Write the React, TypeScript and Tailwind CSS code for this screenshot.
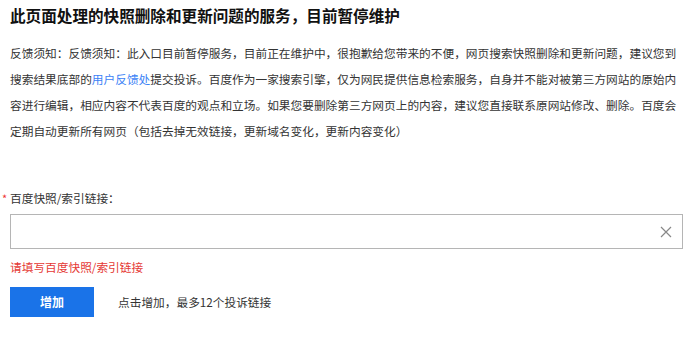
import React from "react";

export default function App() {
  const font = { fontFamily: '"Noto Sans CJK SC", "Noto Sans", sans-serif' };
  return (
    <div className="w-[700px] h-[340px] bg-white pl-[10px] pr-[17px]" style={font}>
      <h1 className="pt-[4px] text-[15.6px] leading-[22px] font-bold text-[#111]">
        此页面处理的快照删除和更新问题的服务，目前暂停维护
      </h1>
      <p className="mt-[14px] text-[11.7px] leading-[26px] text-[#333]">
        反馈须知：反馈须知：此入口目前暂停服务，目前正在维护中，很抱歉给您带来的不便，网页搜索快照删除和更新问题，建议您到搜索结果底部的<span className="text-[#3b82f6]">用户反馈处</span>提交投诉。百度作为一家搜索引擎，仅为网民提供信息检索服务，自身并不能对被第三方网站的原始内容进行编辑，相应内容不代表百度的观点和立场。如果您要删除第三方网页上的内容，建议您直接联系原网站修改、删除。百度会定期自动更新所有网页（包括去掉无效链接，更新域名变化，更新内容变化）
      </p>
      <div className="mt-[44px] relative text-[11.7px] leading-[20px] text-[#333]">
        <span className="absolute left-[-8px] top-[0px] text-[#e33] text-[11px]">*</span>
        百度快照/索引链接：
      </div>
      <div className="mt-[6px] h-[35px] border border-[#b5b5b5] flex items-center justify-end pr-[10px]">
        <svg width="12" height="12" viewBox="0 0 12 12" className="text-[#888]">
          <path d="M1 1 L11 11 M11 1 L1 11" stroke="currentColor" strokeWidth="1.2" fill="none" />
        </svg>
      </div>
      <div className="mt-[9px] text-[11.7px] leading-[18px] text-[#e53935]">请填写百度快照/索引链接</div>
      <div className="mt-[11px] flex items-center gap-[24px]">
        <button className="w-[84px] h-[30px] bg-[#1a73e8] text-white text-[12px] font-bold">增加</button>
        <span className="text-[11.7px] text-[#333]">点击增加，最多12个投诉链接</span>
      </div>
    </div>
  );
}
